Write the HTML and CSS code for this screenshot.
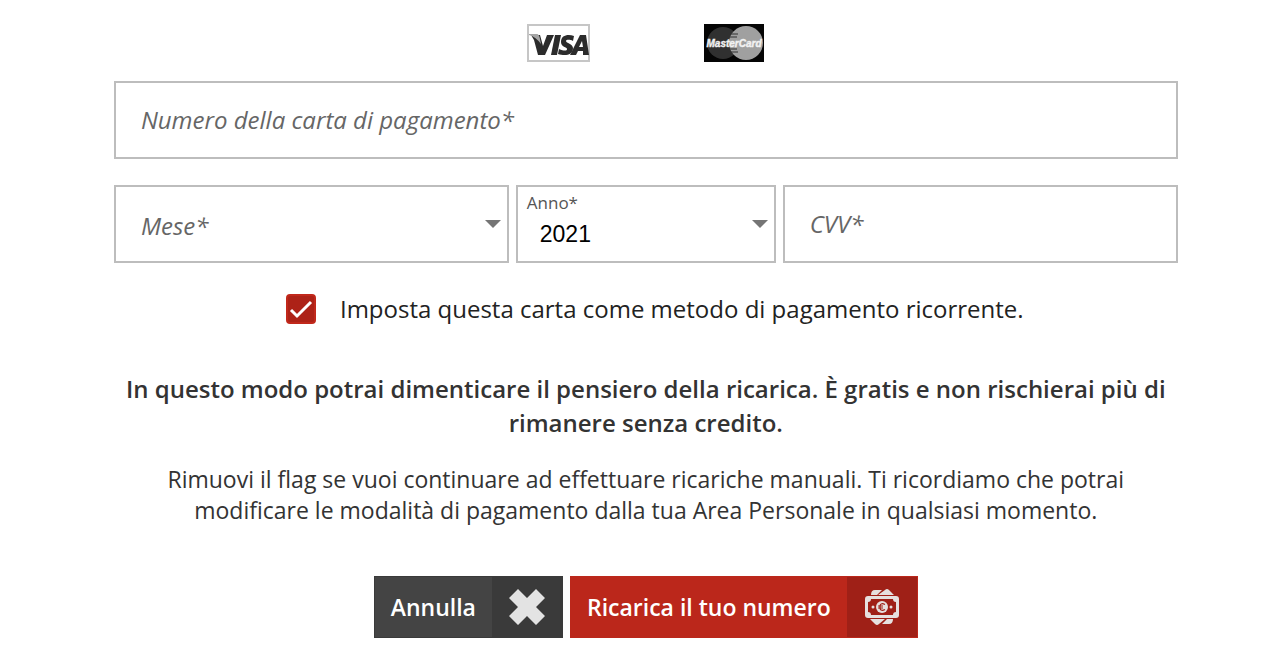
FILE: index.html
```html
<!DOCTYPE html>
<html lang="it">
<head>
<meta charset="utf-8">
<meta name="viewport" content="width=device-width, initial-scale=1">
<title>Ricarica</title>
<link rel="stylesheet" href="styles.css">
</head>
<body>
<form class="payment">
  <div class="cards">
    <svg class="card-logo" width="64" height="38" viewBox="0 0 64 38" role="img" aria-label="Visa">
      <rect x="1" y="1" width="61" height="36" fill="#fff" stroke="#c6c6c6" stroke-width="2"/>
      <path d="M4 11h9l3 11 4-11h7L18 31h-7L7 16z" fill="#2b2b2b"/>
      <path d="M2 10h8q2 0 3 5l1 5Q9 13 2 11z" fill="#a5a5a5"/>
      <path d="M28 11h6l-4 20h-6z" fill="#2b2b2b"/>
      <path d="M47 12l-1 5c-4-2-7-1-7 0 0 2 7 3 7 7 0 8-9 8-15 6l1-5c5 2 8 2 8 0s-6-2-6-7c0-7 7-8 13-6z" fill="#2b2b2b"/>
      <path fill-rule="evenodd" d="M53 11h6l3 20h-6v-4h-5l-2 4h-6zM55 17l-3 6h4z" fill="#2b2b2b"/>
    </svg>
    <svg class="card-logo" width="60" height="38" viewBox="0 0 60 38" role="img" aria-label="MasterCard">
      <path d="M0 0h60v38H0z" fill="#050505"/>
      <circle cx="19" cy="19" r="16" fill="#303030"/>
      <circle cx="42" cy="19" r="17" fill="#a0a0a0"/>
      <path d="M27 10h7M26 13h7M26 25h7M27 28h7" stroke="#303030" stroke-width="1"/>
      <text class="logo-text" x="30" y="23" text-anchor="middle">MasterCard</text>
    </svg>
  </div>

  <div class="field">
    <label class="hint" for="number">Numero della carta di pagamento*</label>
    <input class="control" id="number" type="text" inputmode="numeric">
  </div>

  <div class="row">
    <div class="field">
      <label class="hint hint-select" for="month">Mese*</label>
      <select class="control" id="month"><option value=""></option><option>01</option><option>02</option></select>
      <svg class="arrow" width="16" height="8" viewBox="0 0 16 8" aria-hidden="true"><path d="M0 0h16L8 8z"/></svg>
    </div>
    <div class="field">
      <label class="caption" for="year">Anno*</label>
      <select class="control filled" id="year"><option>2021</option><option>2022</option></select>
      <svg class="arrow" width="16" height="8" viewBox="0 0 16 8" aria-hidden="true"><path d="M0 0h16L8 8z"/></svg>
    </div>
    <div class="field">
      <label class="hint" for="cvv">CVV*</label>
      <input class="control" id="cvv" type="text" inputmode="numeric">
    </div>
  </div>

  <div class="recurring">
    <span class="tick">
      <input class="box" id="recurring" type="checkbox" checked>
      <svg class="mark" width="30" height="30" viewBox="0 0 30 30" aria-hidden="true"><path d="M5 16l6 6L25 8"/></svg>
    </span>
    <label class="recurring-label" for="recurring">Imposta questa carta come metodo di pagamento ricorrente.</label>
  </div>

  <p class="lead">In questo modo potrai dimenticare il pensiero della ricarica. È gratis e non rischierai più di rimanere senza credito.</p>
  <p class="note">Rimuovi il flag se vuoi continuare ad effettuare ricariche manuali. Ti ricordiamo che potrai modificare le modalità di pagamento dalla tua Area Personale in qualsiasi momento.</p>

  <div class="actions">
    <button class="btn cancel" type="button">
      <span class="btn-text">Annulla</span>
      <span class="btn-icon">
        <svg width="38" height="38" viewBox="0 0 38 38" aria-hidden="true"><path d="M10 1l9 9 9-9 9 9-9 9 9 9-9 9-9-9-9 9-9-9 9-9-9-9z" fill="#e3e3e3"/></svg>
      </span>
    </button>
    <button class="btn submit" type="submit">
      <span class="btn-text">Ricarica il tuo numero</span>
      <span class="btn-icon">
        <svg width="34" height="38" viewBox="0 0 34 38" aria-hidden="true" fill="#e6e0df">
          <path d="M10 2h7l-5 5H6q0-5 4-5zM13 7l7-5q2-2 4 0l5 5zM5 31h15l-6 5q-2 2-4 0zM22 31h6q0 5-4 5h-7z"/>
          <path fill-rule="evenodd" d="M3 8h28q3 0 3 3v16q0 3-3 3H3q-3 0-3-3V11q0-3 3-3zM6 11q0 3-3 3v10q3 0 3 3h22q0-3 3-3V14q-3 0-3-3z"/>
          <circle cx="17" cy="19" r="6"/>
          <circle cx="8" cy="19" r="1.5"/><circle cx="26" cy="19" r="1.5"/>
          <path d="M20 16.500q-4-2-5 1v3q1 3 5 1M13 18h5M13 20h5" fill="none" stroke="#9f2017" stroke-width="1.200"/>
        </svg>
      </span>
    </button>
  </div>
</form>
</body>
</html>
```
FILE: styles.css
```css
* {
  box-sizing: border-box;
}

body {
  margin: 0;
  background: #fff;
  color: #333;
  font-family: "Open Sans", sans-serif;
}

.payment {
  margin: 0;
  padding: 24px 8% 16px 8.9%;
}

.cards {
  display: flex;
  justify-content: center;
  gap: 113px;
  margin-bottom: 19px;
}

.card-logo {
  display: block;
}

.logo-text {
  fill: #f2f2f2;
  stroke: #f2f2f2;
  stroke-width: 0.4px;
  font: italic bold 10px "Liberation Sans", sans-serif;
}

.field {
  display: grid;
  grid-template-columns: 1fr;
  align-items: center;
}

.field > * {
  grid-area: 1 / 1;
}

.control {
  width: 100%;
  height: 78px;
  margin: 0;
  padding: 0 24px;
  border: 2px solid #bdbdbd;
  border-radius: 0;
  background: #fff;
  color: #000;
  font: 23px "Liberation Sans", sans-serif;
  appearance: none;
}

.filled {
  padding-top: 20px;
  padding-left: 22px;
}

.hint,
.caption,
.arrow {
  z-index: 1;
  pointer-events: none;
}

.hint {
  padding-left: 27px;
  color: #666;
  font-size: 24px;
  font-style: italic;
  line-height: 32px;
}

.hint-select {
  padding-top: 4px;
}

.caption {
  align-self: start;
  padding: 6px 0 0 11px;
  color: #555;
  font-size: 17px;
  line-height: 24px;
}

.arrow {
  justify-self: end;
  margin-right: 8px;
  fill: #757575;
}

.row {
  display: grid;
  grid-template-columns: 395fr 260fr 395fr;
  gap: 7px;
  margin-top: 26px;
}

.recurring {
  display: flex;
  align-items: center;
  justify-content: center;
  gap: 24px;
  margin-top: 29px;
  padding-left: 18px;
}

.tick {
  display: grid;
}

.tick > * {
  grid-area: 1 / 1;
}

.box {
  width: 30px;
  height: 30px;
  margin: 0;
  border: 2px solid #c1281b;
  border-radius: 4px;
  appearance: none;
}

.box:checked {
  background: #ad2217;
}

.mark {
  fill: none;
  stroke: #fff;
  stroke-width: 3px;
  pointer-events: none;
}

.recurring-label {
  color: #222;
  font-size: 24px;
  line-height: 34px;
}

.lead {
  margin: 46px 0 0;
  font-size: 24px;
  font-weight: 600;
  line-height: 34px;
  text-align: center;
}

.note {
  margin: 24px 0 0;
  padding: 0 40px;
  font-size: 23px;
  line-height: 31px;
  text-align: center;
}

.actions {
  display: flex;
  justify-content: center;
  gap: 7px;
  margin-top: 50px;
}

.btn {
  display: flex;
  align-items: stretch;
  height: 62px;
  padding: 0;
  border: 1px solid;
  color: #fff;
  font: 600 23px "Open Sans", sans-serif;
}

.btn-text {
  align-self: center;
  padding: 0 16px;
}

.btn-icon {
  display: flex;
  align-items: center;
  justify-content: center;
  width: 70px;
}

.cancel {
  border-color: #3a3a3a;
  background: #444;
}

.cancel .btn-icon {
  background: #3a3a3a;
}

.submit {
  border-color: #bb271b;
  background: #bb271b;
}

.submit .btn-icon {
  background: #9f2017;
}
```
